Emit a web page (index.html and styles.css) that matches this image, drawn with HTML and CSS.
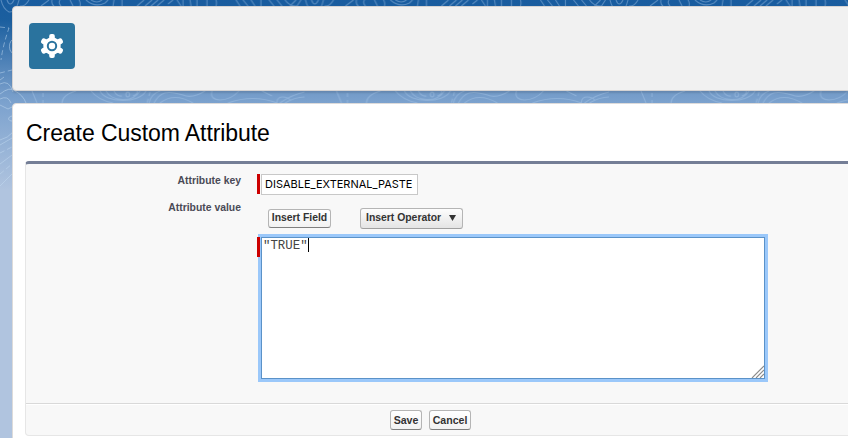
FILE: index.html
```html
<!DOCTYPE html>
<html lang="en">
<head>
<meta charset="utf-8">
<title>Create Custom Attribute</title>
<link rel="stylesheet" href="styles.css">
</head>
<body>
<svg class="contours" width="848" height="190" aria-hidden="true">
  <defs>
    <pattern id="topo" width="304.5" height="190" patternUnits="userSpaceOnUse">
      <g fill="none" stroke="#a9c9ea" stroke-opacity=".42" stroke-width="1.1">
        <path d="M1 0Q3 9 9 12Q16 13 19 0M7 0Q10 8 14 0M20 6Q25 7 29 0M41 6L49 0M52 0Q51 4 54 6M60 0Q58 3 61 6M70 0L73 6M80 6Q81 3 79 0M86 0Q95 8 105 3L108 0M91 0Q97 4 102 0M114 0L113 6M122 6V0M137 6L144 0M145 6L152 0M151 6L158 0M157 6L164 0M168 4L173 0M177 0L181 6M183 6V0M190 0L191 6M197 6V0M207 6V0M216 0Q217 3 216 6M236 0L240 6M243 0L248 6M251 0L255 6M261 6V0M269 0L274 6M277 0L282 6M285 0Q290 7 298 6M290 6L296 0M297 6L301 0"/>
        <path d="M32 91L37 103M76 91Q62 95 62 103M91 91Q98 100 113 103M100 91C105 103 139 104 146 91M106 91C111 101 132 104 140 91M114 91Q117 97 122 96M133 96Q138 94 137 91M149 103Q151 94 160 91M154 103C160 92 167 90 183 95Q192 99 205 91M160 103Q174 92 193 103M212 91C208 103 228 103 239 91M228 103Q253 94 277 103M262 91L272 96M277 103C276 94 289 97 290 100M280 103Q299 90 318 91M285 103Q305 91 326 103"/>
        <ellipse cx="127.7" cy="94.5" rx="1.8" ry="2.4"/>
        <path stroke-dasharray="4 3" d="M43 93V103M150 92L147 103"/>
      </g>
    </pattern>
  </defs>
  <rect width="848" height="190" fill="url(#topo)"/>
  <g fill="none" stroke="#c4dbf1" stroke-opacity=".5">
    <path d="M13 39Q8 43 10 50L12 53M0 84Q9 79 13 92M0 94Q10 86 15 91Q23 95 26 103M0 99Q8 95 11 103M0 105L8 109L12 107M12 116C7 117 8 121 12 121M0 140Q8 138 13 132M0 145L12 138M0 164L12 155M0 186L12 174M0 80L4 77"/>
    <path stroke-dasharray="5 3" d="M0 27L9 28Q3 45 1 60M0 73L12 70M0 153L12 147M0 174L12 164"/>
  </g>
</svg>
<main class="page">
  <header class="banner">
    <div class="badge">
      <svg width="24" height="26" viewBox="-12 -13 24 26">
        <g fill="#fff">
          <circle r="8.7"/>
          <rect x="-2.8" y="-12" width="5.6" height="24" rx="2"/>
          <rect x="-2.8" y="-12" width="5.6" height="24" rx="2" transform="rotate(60)"/>
          <rect x="-2.8" y="-12" width="5.6" height="24" rx="2" transform="rotate(120)"/>
        </g>
        <circle r="4.2" fill="#fff" stroke="#2a739e" stroke-width="2"/>
      </svg>
    </div>
  </header>
  <section class="card">
    <h1>Create Custom Attribute</h1>
    <form class="panel">
      <div class="fields">
        <label class="label-key" for="key">Attribute key</label>
        <div class="required key"><input id="key" type="text" value="DISABLE_EXTERNAL_PASTE"></div>
        <label class="label-value">Attribute value</label>
        <div class="tools">
          <button type="button">Insert Field</button>
          <button type="button" class="select">Insert Operator <svg width="7" height="6"><path d="M0 0H7L3.5 6Z" fill="#333"/></svg></button>
        </div>
        <div class="required value">
          <div class="editor">"TRUE"<span class="caret"></span>
            <svg class="grip" width="13" height="13"><path d="M1 13L13 1M5 13L13 5M9 13L13 9" fill="none" stroke="#8b8b8b" stroke-width="1.1"/></svg>
          </div>
        </div>
      </div>
      <footer class="actions">
        <button type="button">Save</button>
        <button type="button">Cancel</button>
      </footer>
    </form>
  </section>
</main>
</body>
</html>
```
FILE: styles.css
```css
* { box-sizing: border-box; }
body {
  margin: 0;
  height: 438px;
  overflow: hidden;
  font-family: "Liberation Sans", Arial, sans-serif;
  background: linear-gradient(#195c9f 0, #1b5f9f 20px, #729ac8 91px, #7ca2ce 103px, #b0c4df 190px) #b0c4df;
}
.contours { position: absolute; left: 0; top: 0; }
.page {
  position: relative;
  width: 860px;
  padding: 6px 0 0 12px;
  display: flex;
  flex-direction: column;
  gap: 12px;
}
.banner {
  height: 85px;
  padding: 16px;
  background: #f1f1f1;
  border: 1px solid #d5d3d3;
  border-radius: 4px;
  box-shadow: 0 2px 2px rgba(0, 0, 0, .12);
}
.badge {
  width: 46px;
  height: 46px;
  border-radius: 4px;
  background: #2a739e;
  display: flex;
  align-items: center;
  justify-content: center;
}
.card {
  height: 350px;
  padding: 0 0 0 12px;
  background: #fff;
  border: 1px solid #dddbda;
  border-radius: 4px;
}
h1 {
  margin: 0;
  height: 57px;
  padding: 16px 0 0 1px;
  font-size: 23px;
  line-height: 27px;
  font-weight: 400;
  letter-spacing: -.07px;
  color: #000;
}
.panel {
  height: 275px;
  border: 1px solid #e6e6e6;
  border-top: 3px solid #747e96;
  border-radius: 4px;
  background: #f8f8f8;
}
.fields {
  height: 240px;
  display: grid;
  grid-template-columns: 215px 1fr;
  grid-template-rows: 32px 38px 1fr;
  column-gap: 16px;
  border-bottom: 1px solid #d9d9d9;
}
label {
  text-align: right;
  font-size: 10.4px;
  line-height: 13px;
  font-weight: 700;
  color: #4a4a56;
}
.label-key { padding-top: 10px; }
.label-value { padding-top: 5px; }
.required {
  display: flex;
  align-items: flex-start;
}
.required::before {
  content: "";
  width: 3px;
  height: 20px;
  background: #c00;
  flex: none;
}
.key { padding-top: 10px; }
.key input {
  width: 157px;
  height: 21px;
  margin-left: 1px;
  padding: 0 3px 2px;
  border: 1px solid #c8c8c8;
  border-radius: 0;
  background: #fff;
  font: 11px Inter, sans-serif;
  color: #000;
}
.tools {
  display: flex;
  align-items: flex-start;
  padding: 12px 0 0 11px;
  gap: 29px;
}
button {
  height: 20px;
  padding: 0;
  border: 1px solid #b5b5b5;
  border-bottom-color: #7f7f7f;
  border-radius: 3px;
  background: linear-gradient(#fff, #f2f2f2);
  font: 700 10.4px/16px "Liberation Sans", Arial, sans-serif;
  white-space: nowrap;
  color: #333;
}
.tools button:first-child { width: 63px; height: 19px; margin-top: 1px; padding-bottom: 2px; }
.tools .select {
  width: 103px;
  height: 21px;
  padding: 0 6px 1px 5px;
  display: flex;
  align-items: center;
  justify-content: space-between;
  border-bottom-color: #a0a0a0;
  background: linear-gradient(#fdfdfd, #e4e4e4);
}
.value {
  grid-column: 2;
  padding-top: 3px;
}
.editor {
  position: relative;
  width: 504px;
  height: 142px;
  margin-left: 1px;
  padding: 0 1px;
  border: 1px solid #5b92c8;
  outline: 3px solid #9bc8fa;
  background: #fff;
  font: 12.4px/17px "Liberation Mono", "Courier New", monospace;
  color: #444;
}
.value::before { position: relative; z-index: 1; }
.caret {
  display: inline-block;
  width: 1px;
  height: 14px;
  background: #000;
  vertical-align: -3px;
}
.grip { position: absolute; right: 0; bottom: 0; }
.actions {
  display: flex;
  gap: 7px;
  padding: 5px 0 0 364px;
  border-top: 1px solid #fff;
}
.actions button { width: 32px; font-size: 10.6px; }
.actions button + button { width: 42px; }
```
